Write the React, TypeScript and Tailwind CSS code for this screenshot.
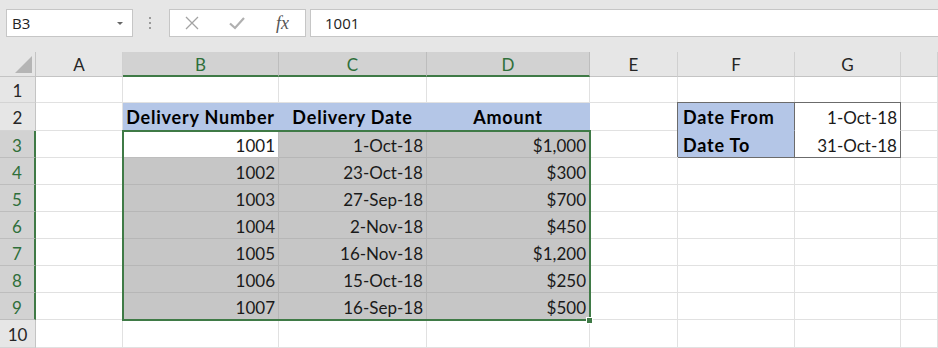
import React from "react";

const FONT = { fontFamily: "Lato, 'Open Sans', sans-serif" };

const colLetters = ["A", "B", "C", "D", "E", "F", "G", ""];

const data = [
  ["1001", "1-Oct-18", "$1,000"],
  ["1002", "23-Oct-18", "$300"],
  ["1003", "27-Sep-18", "$700"],
  ["1004", "2-Nov-18", "$450"],
  ["1005", "16-Nov-18", "$1,200"],
  ["1006", "15-Oct-18", "$250"],
  ["1007", "16-Sep-18", "$500"],
];

function GridCell({ children, className = "" }: { children?: React.ReactNode; className?: string }) {
  return (
    <div className={`flex items-end overflow-visible whitespace-nowrap border-b border-r text-[17px] leading-none text-[#1a1a1a] ${className}`}>
      {children}
    </div>
  );
}

const BOLD = "text-[18px] font-bold tracking-[0.8px] text-black";

export default function App() {
  const rows: React.ReactNode[] = [];

  rows.push(
    <div key="corner" className="relative border-b border-r border-[#c4c4c4] bg-[#e6e6e6]">
      <div className="absolute bottom-[3px] right-[3px] h-0 w-0 border-b-[17px] border-l-[17px] border-b-[#b5b5b5] border-l-transparent" />
    </div>
  );
  colLetters.forEach((l, i) => {
    const sel = i >= 1 && i <= 3;
    rows.push(
      <div
        key={"h" + i}
        className={`flex items-center justify-center pt-[2px] text-[17px] ${
          sel
            ? "border-b-2 border-r border-b-[#3f7a46] border-r-[#bdbdbd] bg-[#d2d2d2] text-[#2f6f3a]"
            : "border-b border-r border-b-[#c4c4c4] border-r-[#d0d0d0] bg-[#e6e6e6] text-[#262626]"
        }`}
      >
        {l}
      </div>
    );
  });

  const rowHeader = (n: number, sel: boolean) => (
    <div
      key={"r" + n}
      className={`flex items-center justify-center pt-[3px] text-[17px] ${
        sel
          ? "border-b border-r-2 border-b-[#bdbdbd] border-r-[#3f7a46] bg-[#d2d2d2] text-[#2f6f3a]"
          : "border-b border-r border-b-[#d4d4d4] border-r-[#c4c4c4] bg-[#e6e6e6] text-[#262626]"
      }`}
    >
      {n}
    </div>
  );

  const plain = (k: string) => <GridCell key={k} className="border-[#e1e1e1] bg-white" />;

  rows.push(rowHeader(1, false));
  for (let c = 0; c < 8; c++) rows.push(plain("1-" + c));

  rows.push(rowHeader(2, false));
  rows.push(plain("2-0"));
  rows.push(
    <GridCell key="2-1" className={`justify-center border-[#b4c6e7] bg-[#b4c6e7] pb-[4px] ${BOLD}`}>Delivery Number</GridCell>
  );
  rows.push(
    <GridCell key="2-2" className={`justify-center border-[#b4c6e7] bg-[#b4c6e7] pb-[4px] ${BOLD}`}>Delivery Date</GridCell>
  );
  rows.push(
    <GridCell key="2-3" className={`justify-center border-[#b4c6e7] bg-[#b4c6e7] pb-[4px] ${BOLD}`}>Amount</GridCell>
  );
  rows.push(plain("2-4"));
  rows.push(
    <GridCell key="2-5" className={`border-b-[#b4c6e7] border-r-[#6b6b6b] bg-[#b4c6e7] pb-[4px] pl-[5px] ${BOLD}`}>Date From</GridCell>
  );
  rows.push(
    <GridCell key="2-6" className="justify-end border-b-white border-r-[#6b6b6b] bg-white pb-[4px] pr-[3px]">1-Oct-18</GridCell>
  );
  rows.push(plain("2-7"));

  data.forEach((d, i) => {
    const n = i + 3;
    rows.push(rowHeader(n, true));
    rows.push(plain(n + "-0"));
    d.forEach((v, j) => {
      const active = i === 0 && j === 0;
      rows.push(
        <GridCell
          key={n + "-" + (j + 1)}
          className={`justify-end pb-[3px] pr-[3px] ${active ? "border-[#bdbdbd] bg-white" : "border-[#b6b6b6] bg-[#c6c6c6]"}`}
        >
          {v}
        </GridCell>
      );
    });
    rows.push(plain(n + "-4"));
    if (n === 3) {
      rows.push(
        <GridCell key="3-5" className={`border-b-[#6b6b6b] border-r-[#6b6b6b] bg-[#b4c6e7] pb-[3px] pl-[5px] ${BOLD}`}>Date To</GridCell>
      );
      rows.push(
        <GridCell key="3-6" className="justify-end border-b-[#6b6b6b] border-r-[#6b6b6b] bg-white pb-[3px] pr-[3px]">31-Oct-18</GridCell>
      );
    } else {
      rows.push(plain(n + "-5"));
      rows.push(plain(n + "-6"));
    }
    rows.push(plain(n + "-7"));
  });

  rows.push(rowHeader(10, false));
  for (let c = 0; c < 8; c++) rows.push(plain("10-" + c));

  return (
    <div className="h-[348px] w-[938px] overflow-hidden bg-white" style={FONT}>
      <div className="flex h-[52px] items-start bg-[#e6e6e6] pt-[9px]">
        <div className="ml-[6px] flex h-[28px] w-[127px] items-center justify-between border border-[#c6c6c6] bg-white pl-[5px] pr-[9px] text-[15px] text-[#222]" style={{ fontFamily: "'Open Sans', sans-serif" }}>
          <span>B3</span>
          <span className="h-0 w-0 border-x-[3px] border-t-[3px] border-x-transparent border-t-[#666]" />
        </div>
        <div className="ml-[16px] mt-[8px] flex flex-col gap-[3px]">
          <span className="h-[2px] w-[2px] bg-[#9a9a9a]" />
          <span className="h-[2px] w-[2px] bg-[#9a9a9a]" />
          <span className="h-[2px] w-[2px] bg-[#9a9a9a]" />
        </div>
        <div className="ml-[18px] flex h-[28px] w-[137px] items-center border border-[#c6c6c6] bg-white">
          <svg className="ml-[14px]" width="16" height="16" viewBox="0 0 16 16">
            <path d="M2 2 L14 14 M14 2 L2 14" stroke="#a3a3a3" strokeWidth="1.3" fill="none" />
          </svg>
          <svg className="ml-[28px]" width="18" height="16" viewBox="0 0 18 16">
            <path d="M2 8.5 L7 13 L16 3" stroke="#b0b0b0" strokeWidth="2.2" fill="none" />
          </svg>
          <span className="ml-[30px] text-[18px] italic text-[#555]" style={{ fontFamily: "'Liberation Serif', serif" }}>
            fx
          </span>
        </div>
        <div className="ml-[4px] flex h-[28px] flex-1 items-center border border-r-0 border-[#c6c6c6] bg-white pl-[14px] text-[15px] text-[#222]" style={{ fontFamily: "'Open Sans', sans-serif" }}>
          1001
        </div>
      </div>

      <div className="relative">
        <div className="grid grid-cols-[36px_87px_156px_148px_163px_88px_117px_106px_37px] grid-rows-[25px_26px_28px_27px_27px_27px_27px_27px_27px_27px_28px]">
          {rows}
        </div>
        <div className="pointer-events-none absolute left-[122px] top-[78px] h-[191px] w-[469px] border-2 border-[#3f7a46]" />
        <div className="pointer-events-none absolute left-[677px] top-[50px] h-[55px] w-[224px] border-l border-t border-[#6b6b6b]" />
        <div className="pointer-events-none absolute left-[586px] top-[265px] h-[7px] w-[7px] border border-white bg-[#3f7a46]" />
      </div>
    </div>
  );
}
